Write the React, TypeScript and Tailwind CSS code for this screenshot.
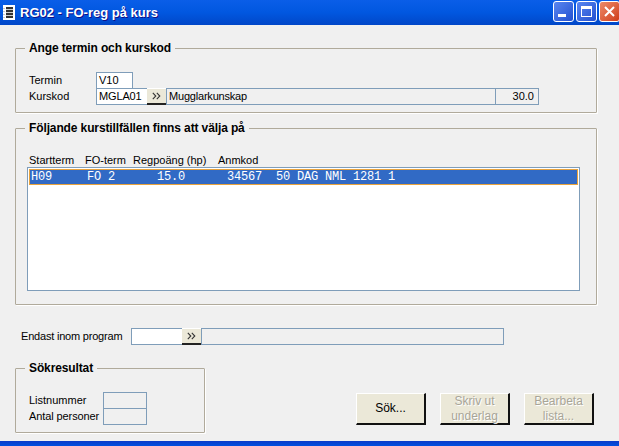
import React from 'react';

const inputBox = 'border border-[#7f9db9] h-[17px] flex items-center';

const GroupBox: React.FC<{ title: string; className: string; children: React.ReactNode }> = ({
  title,
  className,
  children,
}) => (
  <div className={`relative border border-[#b0aa9b] rounded-[1px] shadow-[1px_1px_0_#fff] ${className}`}>
    <div className="absolute left-[9px] top-[-9px] bg-[#f0f0f0] px-[4px] text-[12px] leading-[16px] font-bold tracking-[-0.12px] text-black whitespace-nowrap">
      {title}
    </div>
    {children}
  </div>
);

const ArrowButton: React.FC = () => (
  <button className="w-[19px] h-[17px] -ml-px bg-[#ebe8d8] border-b-2 border-b-[#222] border-t border-t-white flex items-center justify-center">
    <svg width="9" height="8" viewBox="0 0 9 8" fill="none" stroke="#333" strokeWidth="1.1">
      <path d="M0.8 0.8L3.8 4L0.8 7.2" />
      <path d="M4.8 0.8L7.8 4L4.8 7.2" />
    </svg>
  </button>
);

const ActionButton: React.FC<{ label: string[]; disabled?: boolean }> = ({ label, disabled }) => (
  <button
    className={`w-[70px] h-[32px] bg-[#ebe8d8] border-t border-l border-t-white border-l-white border-r-2 border-b-2 border-r-[#111] border-b-[#111] text-[12px] leading-[15px] flex flex-col items-center justify-center ${
      disabled ? 'text-[#a8a598] [text-shadow:1px_1px_0_#fff]' : 'text-black'
    }`}
  >
    {label.map((line) => (
      <span key={line}>{line}</span>
    ))}
  </button>
);

const TitleBar: React.FC = () => (
  <div className="h-[25px] shrink-0 flex items-center bg-gradient-to-b from-[#0a5ee8] via-[#0157e0] to-[#0147c8] pl-[3px]">
    <svg width="13" height="15" viewBox="0 0 13 15" shapeRendering="crispEdges">
      <rect x="0" y="0" width="12" height="15" fill="#fff" />
      <rect x="3" y="2" width="7" height="11" fill="#333" />
      <path d="M3 4h7M3 7h7M3 10h7M0 3h2M0 6h2M0 9h2M0 12h2" stroke="#ccc" />
    </svg>
    <span className="ml-[4px] text-white font-bold text-[13px] [text-shadow:1px_1px_0_#0f1089]">
      RG02 - FO-reg på kurs
    </span>
    <div className="ml-auto -mr-px mb-[2px] flex gap-[2px]">
      <div className="w-[21px] h-[21px] rounded-[3px] border border-white bg-gradient-to-br from-[#5a86f0] to-[#2350d0] flex items-end pl-[4px] pb-[4px]">
        <div className="w-[8px] h-[3px] bg-white" />
      </div>
      <div className="w-[21px] h-[21px] rounded-[3px] border border-white bg-gradient-to-br from-[#5a86f0] to-[#2350d0] flex items-center justify-center">
        <div className="w-[11px] h-[11px] border border-white border-t-[3px]" />
      </div>
      <div className="w-[21px] h-[21px] rounded-[3px] border border-white bg-gradient-to-br from-[#ec8a68] to-[#cf3a14] flex items-center justify-center">
        <svg width="11" height="11" viewBox="0 0 11 11" stroke="#fff" strokeWidth="2">
          <path d="M1 1l9 9M10 1l-9 9" />
        </svg>
      </div>
    </div>
  </div>
);

export default function App() {
  return (
    <div
      className="w-[619px] h-[446px] overflow-hidden flex flex-col bg-[#f0f0f0] text-black text-[11px]"
      style={{ fontFamily: '"Liberation Sans", Arial, sans-serif' }}
    >
      <TitleBar />
      <div className="flex-1 px-[15px] pt-[23px]">
        <GroupBox title="Ange termin och kurskod" className="w-[582px] h-[65px] pt-[23px] pl-[13px]">
          <div className="flex items-center">
            <span className="w-[67px]">Termin</span>
            <div className={`${inputBox} w-[37px] bg-white pl-[2px]`}>V10</div>
          </div>
          <div className="flex items-center -mt-px">
            <span className="w-[67px]">Kurskod</span>
            <div className={`${inputBox} w-[52px] bg-white pl-[2px] tracking-[-0.15px]`}>MGLA01</div>
            <ArrowButton />
            <div className={`${inputBox} w-[330px] pl-[2px] tracking-[-0.2px]`}>Mugglarkunskap</div>
            <div className={`${inputBox} w-[44px] -ml-px justify-end pr-[4px]`}>30.0</div>
          </div>
        </GroupBox>

        <GroupBox title="Följande kurstillfällen finns att välja på" className="w-[582px] h-[177px] mt-[15px] pt-[24px] pl-[11px]">
          <div className="flex h-[14px] items-center pl-[2px]">
            <span className="w-[56px]">Startterm</span>
            <span className="w-[48px]">FO-term</span>
            <span className="w-[85px]">Regpoäng (hp)</span>
            <span>Anmkod</span>
          </div>
          <div className="h-[124px] w-[553px] border border-[#7f9db9] bg-white p-[1px]">
            <div
              className="h-[16px] bg-[#316ac5] border border-[#e8a33d] text-white text-[12px] tracking-[-0.2px] leading-[14px] pl-[1px] whitespace-pre"
              style={{ fontFamily: '"Liberation Mono", "DejaVu Sans Mono", monospace' }}
            >
              {'H09     FO 2      15.0      34567  50 DAG NML 1281 1'}
            </div>
          </div>
        </GroupBox>

        <div className="flex items-center mt-[23px] pl-[6px]">
          <span className="w-[110px] tracking-[-0.2px]">Endast inom program</span>
          <div className={`${inputBox} w-[52px] bg-white`} />
          <ArrowButton />
          <div className={`${inputBox} w-[303px]`} />
        </div>

        <div className="flex items-start mt-[23px]">
          <GroupBox title="Sökresultat" className="w-[190px] h-[65px] pt-[23px] pl-[13px]">
            <div className="flex items-center">
              <span className="w-[74px]">Listnummer</span>
              <div className={`${inputBox} w-[44px]`} />
            </div>
            <div className="flex items-center -mt-px">
              <span className="w-[74px] tracking-[-0.1px]">Antal personer</span>
              <div className={`${inputBox} w-[44px]`} />
            </div>
          </GroupBox>
          <div className="flex gap-[14px] ml-[151px] mt-[25px]">
            <ActionButton label={['Sök...']} />
            <ActionButton label={['Skriv ut', 'underlag']} disabled />
            <ActionButton label={['Bearbeta', 'lista...']} disabled />
          </div>
        </div>
      </div>
      <div className="h-[5px] shrink-0 bg-gradient-to-b from-[#0b3bc8] to-[#0050e0]" />
    </div>
  );
}
